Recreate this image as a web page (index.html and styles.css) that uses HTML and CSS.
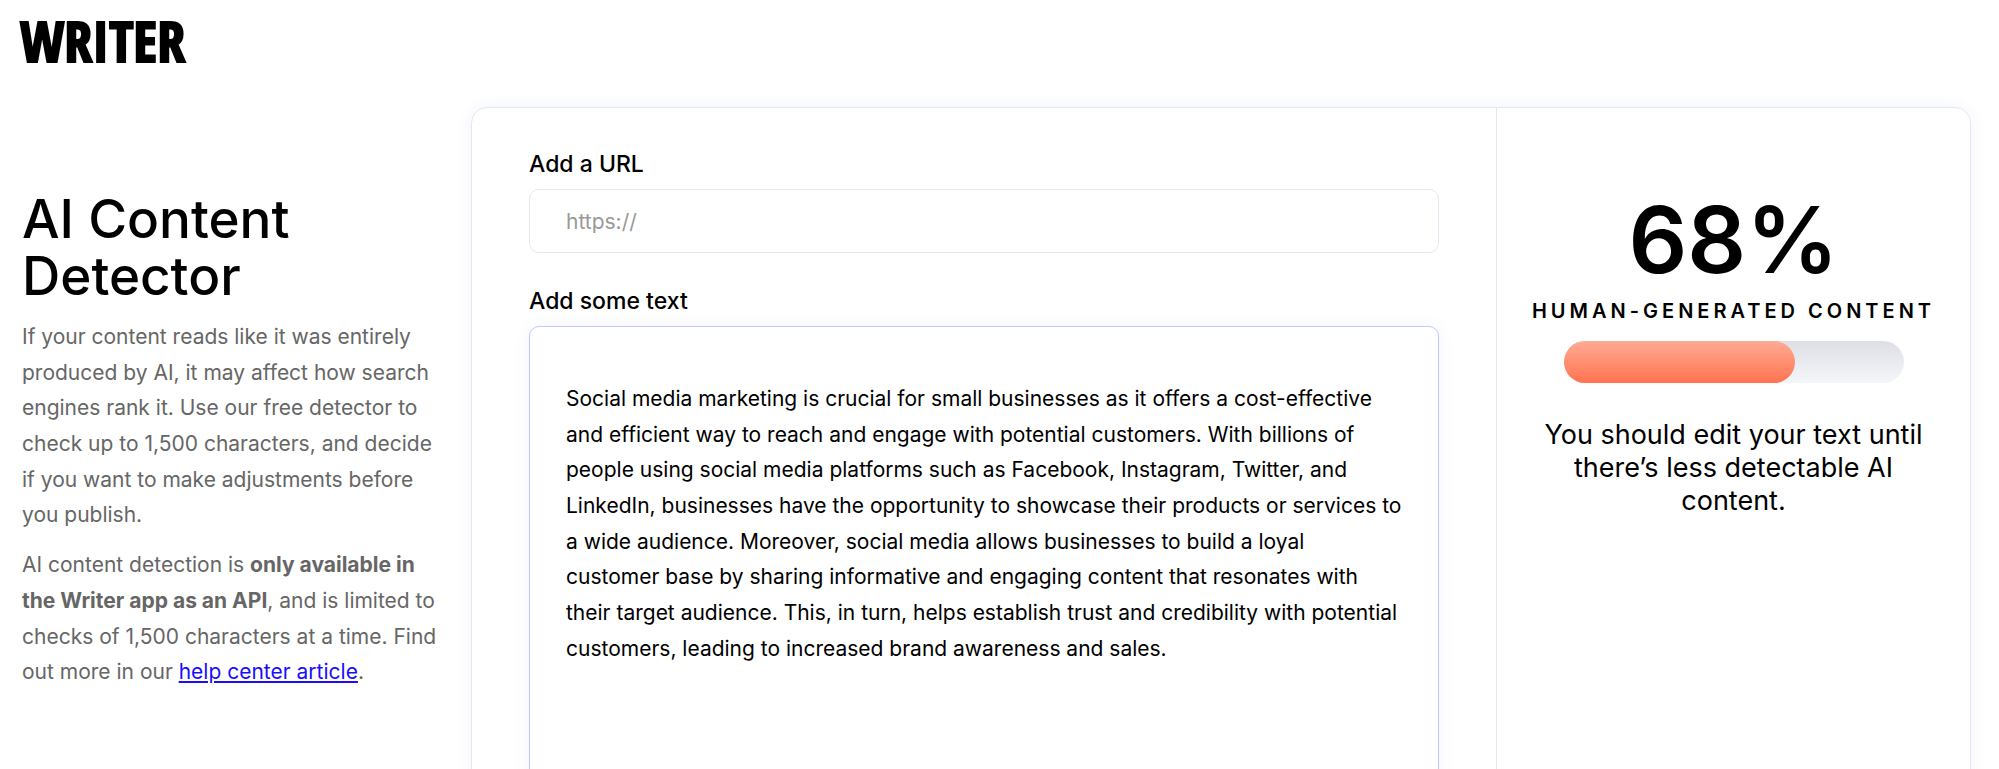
FILE: index.html
```html
<!DOCTYPE html>
<html lang="en">
<head>
<meta charset="utf-8">
<meta name="viewport" content="width=device-width, initial-scale=1">
<title>AI Content Detector</title>
<link rel="stylesheet" href="styles.css">
</head>
<body>
<header class="header">
  <a class="logo" href="#">WRITER</a>
</header>

<main class="page">
  <section class="intro">
    <h1>AI Content Detector</h1>
    <p>If your content reads like it was entirely<br>
    produced by AI, it may affect how search<br>
    engines rank it. Use our free detector to<br>
    check up to 1,500 characters, and decide<br>
    if you want to make adjustments before<br>
    you publish.</p>
    <p>AI content detection is <b>only available in<br>
    the Writer app as an API</b>, and is limited to<br>
    checks of 1,500 characters at a time. Find<br>
    out more in our <a href="#">help center article</a>.</p>
  </section>

  <div class="card">
    <form class="form">
      <label for="url">Add a URL</label>
      <input type="text" id="url" name="url" placeholder="https://">
      <label for="content">Add some text</label>
      <textarea id="content" name="content" spellcheck="false">
Social media marketing is crucial for small businesses as it offers a cost-effective
and efficient way to reach and engage with potential customers. With billions of
people using social media platforms such as Facebook, Instagram, Twitter, and
LinkedIn, businesses have the opportunity to showcase their products or services to
a wide audience. Moreover, social media allows businesses to build a loyal
customer base by sharing informative and engaging content that resonates with
their target audience. This, in turn, helps establish trust and credibility with potential
customers, leading to increased brand awareness and sales.</textarea>
    </form>

    <section class="result">
      <div class="score">68%</div>
      <div class="score-label">Human-generated content</div>
      <div class="bar"><div class="bar-fill" style="width: 68%"></div></div>
      <p>You should edit your text until<br>there’s less detectable AI<br>content.</p>
    </section>
  </div>
</main>
</body>
</html>
```

FILE: styles.css
```css
* {
    box-sizing: border-box;
}

body {
    margin: 0;
    height: 100vh;
    overflow: hidden;
    background: #fff;
    color: #000;
    font-family: Inter, "Open Sans", sans-serif;
}

.header {
    height: 107px;
    padding: 0 20px;
}

.logo {
    color: #000;
    font-family: "Open Sans Condensed", "Roboto Condensed", "Liberation Sans Narrow", sans-serif;
    font-size: 56px;
    font-weight: 800;
    line-height: 80px;
    text-decoration: none;
    -webkit-text-stroke: 2px #000;
}

.page {
    display: grid;
    grid-template-columns: 449px 1fr;
    padding: 0 28px 0 22px;
}

/* left column */
.intro {
    padding-top: 84px;
    color: #666;
    font-size: 21px;
    line-height: 1.7;
    white-space: nowrap;
}

.intro h1 {
    margin: 0 0 14px;
    color: #000;
    font-size: 53px;
    font-weight: 500;
    line-height: 57px;
    white-space: normal;
}

.intro p {
    margin: 0 0 14px;
}

.intro a {
    color: #1a0dff;
}

/* detector card */
.card {
    display: grid;
    grid-template-columns: 1fr 474px;
    border: 1px solid #e4e7f0;
    border-radius: 16px;
    box-shadow: 0 0 16px rgba(80, 100, 255, 0.08);
}

.form {
    display: flex;
    flex-direction: column;
    padding: 40px 57px;
}

.form label {
    font-size: 23px;
    font-weight: 500;
    line-height: 32px;
    margin-bottom: 9px;
}

.form input,
.form textarea {
    width: 100%;
    border: 1px solid #e4e7f0;
    border-radius: 10px;
    outline: none;
    background: #fff;
    color: #000;
    font-family: inherit;
    font-size: 21px;
}

.form input {
    height: 64px;
    margin-bottom: 32px;
    padding: 0 36px;
}

.form input::placeholder {
    color: #999;
}

.form textarea {
    height: 560px;
    padding: 54px 36px;
    border-color: #bfc8ff;
    box-shadow: 0 0 16px rgba(80, 100, 255, 0.08);
    line-height: 1.7;
    resize: none;
}

.result {
    padding: 84px 24px;
    border-left: 1px solid #e4e7f0;
    text-align: center;
    white-space: nowrap;
}

.score {
    font-size: 92px;
    font-weight: 600;
    line-height: 96px;
}

.score-label {
    margin: 7px 0 14px;
    font-size: 20px;
    font-weight: 600;
    letter-spacing: 4px;
    line-height: 32px;
    text-transform: uppercase;
}

.bar {
    width: 80%;
    height: 42px;
    margin: 0 auto;
    border-radius: 21px;
    background: linear-gradient(#dddfe4, #f5f6fa);
}

.bar-fill {
    height: 100%;
    border-radius: 21px;
    background: linear-gradient(#ffab94, #ff7350);
}

.result p {
    margin: 35px 0 0;
    font-size: 27px;
    line-height: 33px;
}
```
